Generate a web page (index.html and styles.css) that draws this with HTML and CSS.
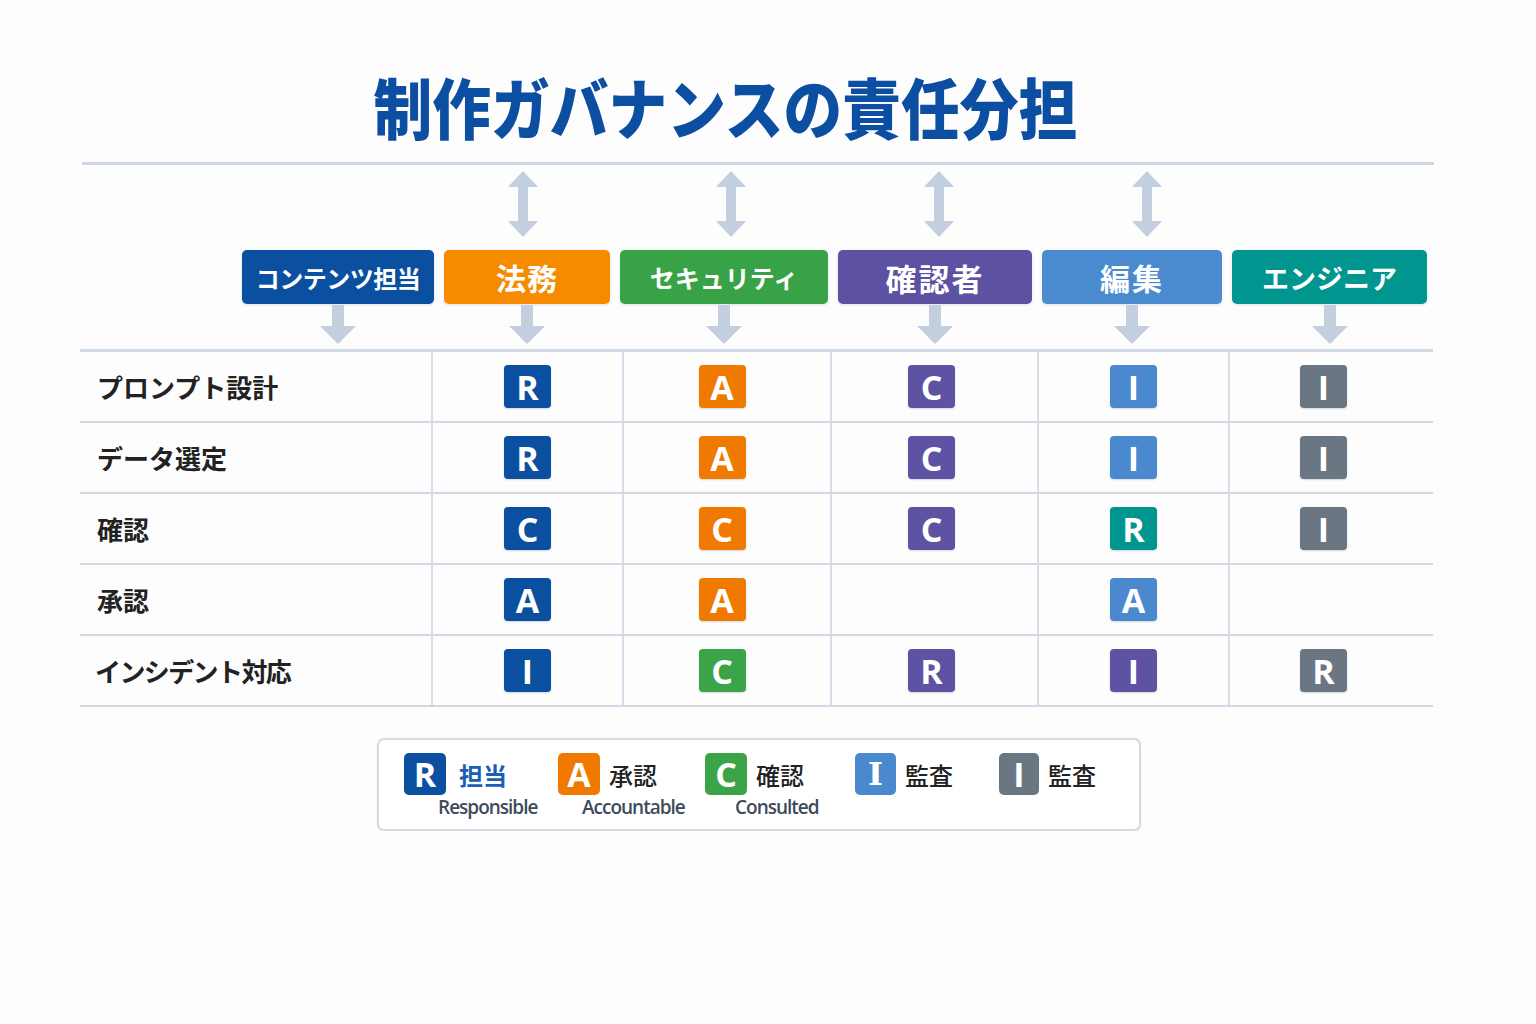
FILE: index.html
```html
<!DOCTYPE html>
<html lang="ja">
<head>
<meta charset="utf-8">
<title>制作ガバナンスの責任分担</title>
<link rel="stylesheet" href="styles.css">
</head>
<body>
<div class="page">
  <h1 class="title"><span class="title-text">制作ガバナンスの責任分担</span></h1>
  <div class="rule"></div>

  <div class="dbl-arrows">
    <svg class="dbl" viewBox="0 0 30 66" width="30" height="66"><path d="M15 0 L30 16 L20 16 L20 50 L30 50 L15 66 L0 50 L10 50 L10 16 L0 16 Z"/></svg>
    <svg class="dbl" viewBox="0 0 30 66" width="30" height="66"><path d="M15 0 L30 16 L20 16 L20 50 L30 50 L15 66 L0 50 L10 50 L10 16 L0 16 Z"/></svg>
    <svg class="dbl" viewBox="0 0 30 66" width="30" height="66"><path d="M15 0 L30 16 L20 16 L20 50 L30 50 L15 66 L0 50 L10 50 L10 16 L0 16 Z"/></svg>
    <svg class="dbl" viewBox="0 0 30 66" width="30" height="66"><path d="M15 0 L30 16 L20 16 L20 50 L30 50 L15 66 L0 50 L10 50 L10 16 L0 16 Z"/></svg>
  </div>

  <div class="heads">
    <div class="head-col hc1">
      <div class="head c-navy t-content">コンテンツ担当</div>
      <svg class="down" viewBox="0 0 36 39" width="36" height="39"><path d="M12 0 L24 0 L24 21 L36 21 L18 39 L0 21 L12 21 Z"/></svg>
    </div>
    <div class="head-col hc2">
      <div class="head c-orange t-legal">法務</div>
      <svg class="down" viewBox="0 0 36 39" width="36" height="39"><path d="M12 0 L24 0 L24 21 L36 21 L18 39 L0 21 L12 21 Z"/></svg>
    </div>
    <div class="head-col hc3">
      <div class="head c-green t-sec">セキュリティ</div>
      <svg class="down" viewBox="0 0 36 39" width="36" height="39"><path d="M12 0 L24 0 L24 21 L36 21 L18 39 L0 21 L12 21 Z"/></svg>
    </div>
    <div class="head-col hc4">
      <div class="head c-purple t-rev">確認者</div>
      <svg class="down" viewBox="0 0 36 39" width="36" height="39"><path d="M12 0 L24 0 L24 21 L36 21 L18 39 L0 21 L12 21 Z"/></svg>
    </div>
    <div class="head-col hc5">
      <div class="head c-sky t-edit">編集</div>
      <svg class="down" viewBox="0 0 36 39" width="36" height="39"><path d="M12 0 L24 0 L24 21 L36 21 L18 39 L0 21 L12 21 Z"/></svg>
    </div>
    <div class="head-col hc6">
      <div class="head c-teal t-eng">エンジニア</div>
      <svg class="down" viewBox="0 0 36 39" width="36" height="39"><path d="M12 0 L24 0 L24 21 L36 21 L18 39 L0 21 L12 21 Z"/></svg>
    </div>
  </div>

  <div class="matrix">
    <div class="row">
      <div class="cell label">プロンプト設計</div>
      <div class="cell"><span class="badge b-navy">R</span></div>
      <div class="cell"><span class="badge b-orange">A</span></div>
      <div class="cell"><span class="badge b-purple">C</span></div>
      <div class="cell"><span class="badge b-sky">I</span></div>
      <div class="cell"><span class="badge b-gray">I</span></div>
    </div>
    <div class="row">
      <div class="cell label">データ選定</div>
      <div class="cell"><span class="badge b-navy">R</span></div>
      <div class="cell"><span class="badge b-orange">A</span></div>
      <div class="cell"><span class="badge b-purple">C</span></div>
      <div class="cell"><span class="badge b-sky">I</span></div>
      <div class="cell"><span class="badge b-gray">I</span></div>
    </div>
    <div class="row">
      <div class="cell label">確認</div>
      <div class="cell"><span class="badge b-navy">C</span></div>
      <div class="cell"><span class="badge b-orange">C</span></div>
      <div class="cell"><span class="badge b-purple">C</span></div>
      <div class="cell"><span class="badge b-teal">R</span></div>
      <div class="cell"><span class="badge b-gray">I</span></div>
    </div>
    <div class="row">
      <div class="cell label">承認</div>
      <div class="cell"><span class="badge b-navy">A</span></div>
      <div class="cell"><span class="badge b-orange">A</span></div>
      <div class="cell"></div>
      <div class="cell"><span class="badge b-sky">A</span></div>
      <div class="cell"></div>
    </div>
    <div class="row">
      <div class="cell label tight">インシデント対応</div>
      <div class="cell"><span class="badge b-navy">I</span></div>
      <div class="cell"><span class="badge b-green">C</span></div>
      <div class="cell"><span class="badge b-purple">R</span></div>
      <div class="cell"><span class="badge b-purple">I</span></div>
      <div class="cell"><span class="badge b-gray">R</span></div>
    </div>
  </div>

  <div class="legend">
    <div class="li li1">
      <div class="li-top gap-wide"><span class="lbadge b-navy">R</span><span class="li-label blue">担当</span></div>
      <div class="li-sub sub1">Responsible</div>
    </div>
    <div class="li li2">
      <div class="li-top"><span class="lbadge b-orange">A</span><span class="li-label">承認</span></div>
      <div class="li-sub sub2">Accountable</div>
    </div>
    <div class="li li3">
      <div class="li-top"><span class="lbadge b-green">C</span><span class="li-label">確認</span></div>
      <div class="li-sub sub3">Consulted</div>
    </div>
    <div class="li li4">
      <div class="li-top"><span class="lbadge b-sky serif">I</span><span class="li-label">監査</span></div>
    </div>
    <div class="li li5">
      <div class="li-top"><span class="lbadge b-gray narrow">I</span><span class="li-label">監査</span></div>
    </div>
  </div>
</div>
</body>
</html>
```

FILE: styles.css
```css
html, body {
  margin: 0;
  padding: 0;
  background: #fdfdfe;
}

body {
  font-family: "Noto Sans CJK JP", "Noto Sans", sans-serif;
  color: #222;
}

.page {
  width: 1353px;
  margin-left: 80px;
  padding-top: 69px;
}

.title {
  margin: 0;
  height: 72px;
  line-height: 72px;
  text-align: center;
  padding-right: 62px;
  font-size: 66px;
  font-weight: 900;
  color: #0c4fa2;
  white-space: nowrap;
}

.title-text {
  display: inline-block;
  transform: scaleX(0.89);
  letter-spacing: 0;
}

.rule {
  margin-top: 21px;
  margin-left: 2px;
  width: 1352px;
  height: 3px;
  background: #cdd6e3;
}

.dbl-arrows {
  display: flex;
  gap: 178px;
  margin-top: 6px;
  padding-left: 428px;
  height: 66px;
}

.dbl path,
.down path {
  fill: #c3cedf;
}

.heads {
  display: flex;
  gap: 10px;
  margin-top: 13px;
  padding-left: 162px;
}

.head-col {
  display: flex;
  flex-direction: column;
  align-items: center;
}

.hc1 { width: 192px; }
.hc2 { width: 166px; }
.hc3 { width: 208px; }
.hc4 { width: 194px; }
.hc5 { width: 180px; }
.hc6 { width: 195px; }

.head {
  width: 100%;
  height: 54px;
  border-radius: 5px;
  display: flex;
  align-items: center;
  justify-content: center;
  color: #fff;
  font-weight: 700;
  font-size: 30px;
  box-shadow: 0 1px 3px rgba(40, 60, 90, 0.15);
}

.t-content { font-size: 24px; letter-spacing: -0.5px; }
.t-legal { font-size: 30px; letter-spacing: 1px; }
.t-sec { font-size: 25px; }
.t-rev { font-size: 31px; letter-spacing: 2px; }
.t-edit { font-size: 30px; letter-spacing: 2px; }
.t-eng { font-size: 27px; }

.c-navy { background: #0b4fa0; }
.c-orange { background: #f68b00; }
.c-green { background: #38a346; }
.c-purple { background: #5d51a2; }
.c-sky { background: #4a8bd0; }
.c-teal { background: #00958f; }

.down {
  display: block;
  margin-top: 1px;
}

.matrix {
  margin-top: 5px;
  border-top: 3px solid #d1d9e5;
}

.row {
  display: grid;
  grid-template-columns: 351px 191px 208px 207px 191px 205px;
  height: 71px;
  box-sizing: border-box;
  border-bottom: 2px solid #d1d9e5;
}

.cell {
  display: flex;
  align-items: center;
  justify-content: center;
  border-left: 2px solid #d6dde8;
}

.cell:nth-child(3) { padding-right: 10px; }
.cell:nth-child(4) { padding-right: 6px; }
.cell:nth-child(6) { padding-right: 16px; }

.cell.label {
  border-left: none;
  justify-content: flex-start;
  padding-left: 17px;
  font-size: 26px;
  font-weight: 700;
  color: #222;
}

.cell.label.tight {
  padding-left: 15px;
  letter-spacing: -1.6px;
}

.badge {
  width: 47px;
  height: 43px;
  border-radius: 4px;
  display: inline-flex;
  align-items: center;
  justify-content: center;
  color: #fff;
  font-family: "Open Sans", "Noto Sans", sans-serif;
  font-weight: 700;
  font-size: 34px;
  line-height: 1;
  box-shadow: 0 1px 2px rgba(40, 60, 90, 0.2);
}

.b-navy { background: #0b4fa0; }
.b-orange { background: #f07a00; }
.b-purple { background: #5e52a3; }
.b-sky { background: #4a89cd; }
.b-gray { background: #6b7683; }
.b-teal { background: #00968f; }
.b-green { background: #3ba449; }

.legend {
  margin-top: 31px;
  margin-left: 297px;
  width: 764px;
  height: 93px;
  box-sizing: border-box;
  border: 2px solid #d3dbe6;
  border-radius: 7px;
  background: #fff;
  padding: 13px 0 0 25px;
  display: flex;
  box-shadow: 0 1px 3px rgba(40, 60, 90, 0.08);
}

.li {
  display: flex;
  flex-direction: column;
}

.li1 { width: 154px; }
.li2 { width: 147px; }
.li3 { width: 150px; }
.li4 { width: 144px; }

.li-top {
  display: flex;
  align-items: center;
  gap: 9px;
  height: 42px;
}

.li-top.gap-wide { gap: 13px; }

.lbadge {
  width: 42px;
  height: 42px;
  border-radius: 5px;
  display: inline-flex;
  align-items: center;
  justify-content: center;
  color: #fff;
  font-family: "Open Sans", "Noto Sans", sans-serif;
  font-weight: 700;
  font-size: 34px;
  line-height: 1;
}

.lbadge.serif {
  font-family: "DejaVu Serif", "Liberation Serif", serif;
  font-size: 32px;
  width: 41px;
}

.lbadge.narrow {
  width: 40px;
}

.li-label {
  font-size: 24px;
  font-weight: 500;
  color: #222;
  white-space: nowrap;
}

.li-label.blue {
  color: #1a5fb4;
  font-weight: 700;
}

.li-sub {
  margin-top: 1px;
  font-family: "Open Sans", "Noto Sans", sans-serif;
  font-size: 19px;
  font-weight: 600;
  letter-spacing: -1px;
  line-height: 22px;
  color: #3d4b5c;
  white-space: nowrap;
}

.sub1 { margin-left: 34px; }
.sub2 { margin-left: 24px; }
.sub3 { margin-left: 30px; }
```
